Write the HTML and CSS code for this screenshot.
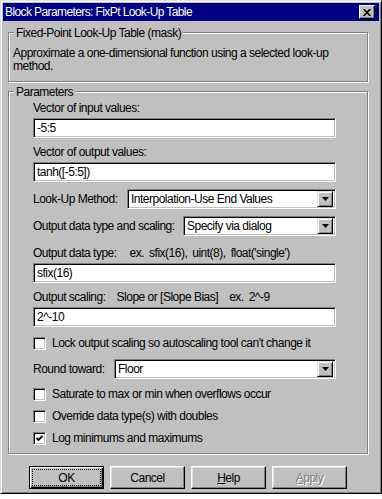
FILE: index.html
```html
<!DOCTYPE html>
<html lang="en">
<head>
    <meta charset="UTF-8">
    <title>Block Parameters: FixPt Look-Up Table</title>
    <link rel="stylesheet" href="styles.css">
</head>
<body>
    <div class="dialog">
        <div class="titlebar">
            <span class="title">Block Parameters: FixPt Look-Up Table</span>
            <span class="close-btn">
                <svg width="8" height="7" viewBox="0 0 8 7"><path d="M0.6 0 L7.4 7 M7.4 0 L0.6 7" stroke="#000" stroke-width="1.7"/></svg>
            </span>
        </div>

        <!-- mask description -->
        <div class="group group-mask">
            <span class="legend">Fixed-Point Look-Up Table (mask)</span>
            <p class="description">Approximate a one-dimensional function using a selected look-up<br>method.</p>
        </div>

        <!-- block parameters -->
        <div class="group group-params">
            <span class="legend">Parameters</span>

            <div class="field-label first">Vector of input values:</div>
            <div class="edit">-5:5</div>

            <div class="field-label">Vector of output values:</div>
            <div class="edit">tanh([-5:5])</div>

            <div class="combo-row">
                <span>Look-Up Method:</span>
                <div class="combo combo-method"><span class="combo-text">Interpolation-Use End Values</span><span class="combo-btn"><svg width="7" height="4" viewBox="0 0 7 4"><path d="M0 0h7l-3.5 4z" fill="#000"/></svg></span></div>
            </div>

            <div class="combo-row">
                <span>Output data type and scaling:</span>
                <div class="combo combo-scaling"><span class="combo-text">Specify via dialog</span><span class="combo-btn"><svg width="7" height="4" viewBox="0 0 7 4"><path d="M0 0h7l-3.5 4z" fill="#000"/></svg></span></div>
            </div>

            <div class="field-label wide">Output data type:<span class="hint hint-ex">ex.</span><span class="hint">sfix(16),</span><span class="hint">uint(8),</span><span class="hint">float('single')</span></div>
            <div class="edit">sfix(16)</div>

            <div class="field-label">Output scaling:<span class="hint hint-slope">Slope or [Slope Bias]</span><span class="hint hint-slope">ex.</span><span class="hint">2^-9</span></div>
            <div class="edit">2^-10</div>

            <div class="check-row wide">
                <span class="checkbox"></span>
                <span>Lock output scaling so autoscaling tool can't change it</span>
            </div>

            <div class="combo-row wide">
                <span>Round toward:</span>
                <div class="combo combo-round"><span class="combo-text">Floor</span><span class="combo-btn"><svg width="7" height="4" viewBox="0 0 7 4"><path d="M0 0h7l-3.5 4z" fill="#000"/></svg></span></div>
            </div>

            <div class="check-row">
                <span class="checkbox"></span>
                <span>Saturate to max or min when overflows occur</span>
            </div>
            <div class="check-row">
                <span class="checkbox"></span>
                <span>Override data type(s) with doubles</span>
            </div>
            <div class="check-row">
                <span class="checkbox"><svg width="7" height="7" viewBox="0 0 7 7"><path d="M0.5 3 L2.5 5 L6.5 1" fill="none" stroke="#000" stroke-width="1.8"/></svg></span>
                <span>Log minimums and maximums</span>
            </div>
        </div>

        <div class="buttons">
            <div class="btn btn-default"><span class="focus-rect">OK</span></div>
            <div class="btn">Cancel</div>
            <div class="btn"><span><u>H</u>elp</span></div>
            <div class="btn btn-disabled"><span><u>A</u>pply</span></div>
        </div>
    </div>
</body>
</html>
```

FILE: styles.css
```css
body {
    margin: 0;
    background: #fff;
    font-family: 'Liberation Sans', Arial, sans-serif;
    font-size: 12px;
    letter-spacing: -0.5px;
    color: #000;
}

/* Window frame */
.dialog {
    width: 382px;
    height: 494px;
    box-sizing: border-box;
    background: #c0c0c0;
    border: 1px solid;
    border-color: #dfdfdf #000 #000 #dfdfdf;
    box-shadow: inset 1px 1px 0 #fff, inset -1px -1px 0 #808080;
    padding: 2px;
    display: flex;
    flex-direction: column;
}

.titlebar {
    flex: none;
    height: 18px;
    background: #000080;
    color: #fff;
    display: flex;
    align-items: center;
    justify-content: space-between;
    padding: 0 4px 0 2px;
}
.title {
    line-height: 18px;
    letter-spacing: -0.6px;
}
.close-btn {
    width: 16px;
    height: 14px;
    box-sizing: border-box;
    background: #c0c0c0;
    border: 1px solid;
    border-color: #fff #000 #000 #fff;
    box-shadow: inset -1px -1px 0 #808080;
    display: flex;
    align-items: center;
    justify-content: center;
}

/* Etched group boxes */
.group {
    flex: none;
    position: relative;
    width: 360px;
    margin-left: 5px;
    box-sizing: border-box;
    border: 1px solid #808080;
    box-shadow: 1px 1px 0 #fff, inset 1px 1px 0 #fff;
}
.legend {
    position: absolute;
    top: -7px;
    left: 5px;
    padding: 0 2px;
    line-height: 14px;
    background: #c0c0c0;
    white-space: nowrap;
}
.group-mask {
    margin-top: 11px;
    height: 50px;
    padding: 14px 0 0 4px;
}
.description {
    margin: 0;
    line-height: 13px;
    white-space: nowrap;
}
.group-params {
    margin-top: 9px;
    height: 363px;
    padding: 9px 0 0 24px;
    display: flex;
    flex-direction: column;
}

/* Parameter rows */
.field-label {
    height: 14px;
    line-height: 14px;
    margin-top: 7px;
    white-space: nowrap;
}
.field-label.first {
    margin-top: 0;
}
.hint {
    margin-left: 5px;
}
.hint-ex {
    margin-left: 13px;
}
.hint-slope {
    margin-left: 11px;
}
.edit,
.combo {
    height: 20px;
    box-sizing: border-box;
    background: #fff;
    border: 1px solid;
    border-color: #808080 #fff #fff #808080;
    box-shadow: inset 1px 1px 0 #000, inset -1px -1px 0 #c0c0c0;
}
.edit {
    width: 303px;
    margin-top: 3px;
    padding: 0 3px;
    line-height: 18px;
}
.combo-row {
    height: 20px;
    width: 303px;
    margin-top: 7px;
    display: flex;
    align-items: center;
    justify-content: space-between;
    white-space: nowrap;
}
.combo {
    display: flex;
    align-items: center;
    padding: 2px;
}
.combo-text {
    flex: 1;
    padding-left: 1px;
    line-height: 16px;
}
.combo-btn {
    width: 16px;
    height: 16px;
    box-sizing: border-box;
    background: #c0c0c0;
    border: 1px solid;
    border-color: #dfdfdf #000 #000 #dfdfdf;
    box-shadow: inset 1px 1px 0 #fff, inset -1px -1px 0 #808080;
    display: flex;
    align-items: center;
    justify-content: center;
}
.combo-method { width: 209px; }
.combo-scaling { width: 153px; }
.combo-round { width: 222px; }

.check-row {
    height: 14px;
    margin-top: 8px;
    display: flex;
    align-items: center;
    gap: 6px;
    white-space: nowrap;
}
.wide {
    margin-top: 9px;
}
.field-label.wide {
    margin-top: 10px;
}
.checkbox {
    width: 13px;
    height: 13px;
    box-sizing: border-box;
    background: #fff;
    border: 1px solid;
    border-color: #808080 #fff #fff #808080;
    box-shadow: inset 1px 1px 0 #000, inset -1px -1px 0 #c0c0c0;
    display: flex;
    align-items: center;
    justify-content: center;
}

/* Dialog buttons */
.buttons {
    flex: none;
    display: flex;
    gap: 6px;
    margin: 12px 0 0 26px;
}
.btn {
    width: 75px;
    height: 23px;
    box-sizing: border-box;
    background: #c0c0c0;
    border: 1px solid;
    border-color: #fff #000 #000 #fff;
    box-shadow: inset -1px -1px 0 #808080, inset 1px 1px 0 #dfdfdf;
    display: flex;
    align-items: center;
    justify-content: center;
}
.btn-default {
    border-color: #000;
    box-shadow: inset 1px 1px 0 #fff, inset -1px -1px 0 #000, inset -2px -2px 0 #808080;
    padding: 3px;
}
.focus-rect {
    flex: 1;
    align-self: stretch;
    display: flex;
    align-items: center;
    justify-content: center;
    outline: 1px dotted #000;
}
.btn-disabled {
    color: #808080;
    text-shadow: 1px 1px 0 #fff;
}
```
